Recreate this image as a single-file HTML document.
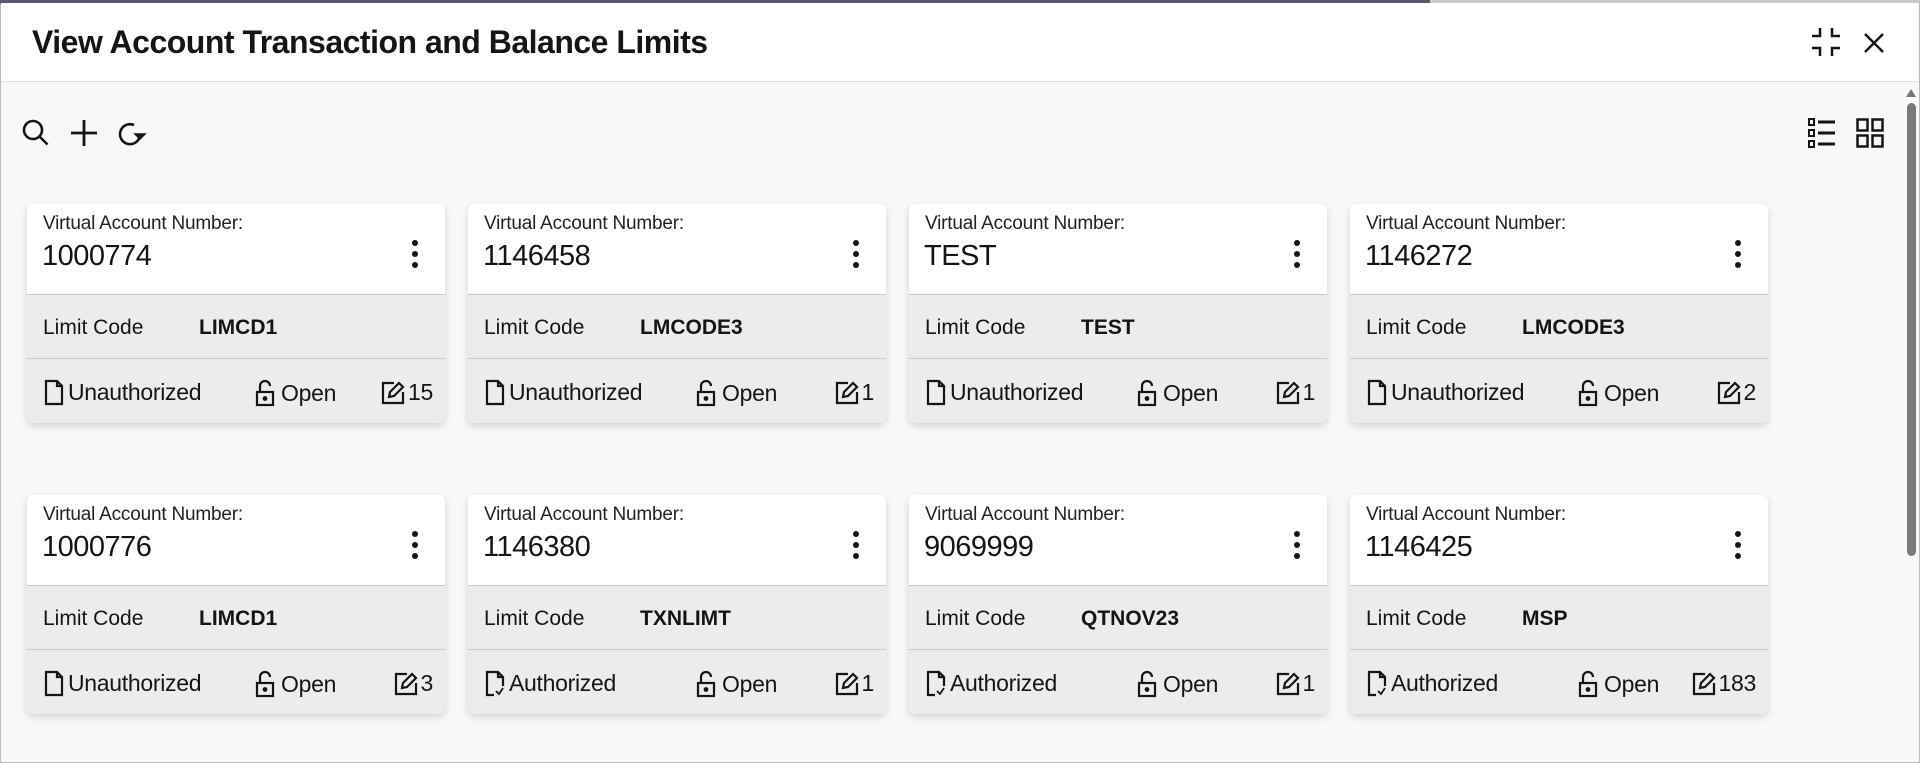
<!DOCTYPE html>
<html><head><meta charset="utf-8"><style>
*{box-sizing:border-box;margin:0;padding:0}
body{width:1920px;height:763px;overflow:hidden;background:#fff;font-family:"Liberation Sans",sans-serif;color:#161513;position:relative}
.frame{position:absolute;left:0;top:0;width:1920px;height:763px;border:1px solid #bbb;border-top:3px solid #c8c8d0;background:#f8f8f8}
.topbar{position:absolute;left:0;top:0;width:1430px;height:4px;background:#555a6e}
.hdr{position:absolute;left:1px;top:3px;width:1917px;height:79px;background:#fff;border-bottom:1px solid #ddd}
.hdr h1{position:absolute;left:31px;top:21px;font-size:32px;font-weight:bold;letter-spacing:-0.5px}
.card{position:absolute;width:418px;height:219px;border-radius:6px;background:#ececec;box-shadow:0 3px 8px rgba(0,0,0,.15);overflow:hidden}
.top{height:91px;background:#fff;border-bottom:1px solid #c9c9c9;position:relative}
.lbl{position:absolute;left:16px;top:9px;font-size:19px;letter-spacing:-0.2px;color:#222}
.num{position:absolute;left:15px;top:36px;font-size:29px;letter-spacing:-0.5px}
.dots{position:absolute;right:27px;top:36px;width:6px}
.dots i{display:block;width:6px;height:6px;border-radius:3px;background:#161513;margin-bottom:5px}
.lim{height:64px;border-bottom:1px solid #c9c9c9;position:relative;font-size:21px;letter-spacing:0}
.lim span{position:absolute;top:21px}
.ft{position:relative;height:64px;font-size:23px;letter-spacing:-0.3px}
.ft .s{position:absolute;left:17px;top:20px;display:flex;align-items:center;gap:4px}
.ft .o{position:absolute;left:228px;top:20px;display:flex;align-items:center;gap:6px}
.ft .e{position:absolute;right:12px;top:20px;display:flex;align-items:center;gap:3px}
svg{display:block}
</style></head><body>
<div class="frame"></div>
<div class="topbar"></div>
<div class="hdr"><h1>View Account Transaction and Balance Limits</h1>
<svg style="position:absolute;left:1809px;top:22px" width="32" height="34" viewBox="0 0 32 34" fill="none" stroke="#161513" stroke-width="2.5"><path d="M2 11h8V3M22 3v8h8M2 23h8v8M30 23h-8v8"/></svg>
<svg style="position:absolute;left:1862px;top:29px" width="22" height="22" viewBox="0 0 22 22" stroke="#161513" stroke-width="2.5"><path d="M2 2l18 18M20 2L2 20"/></svg>
</div>
<svg style="position:absolute;left:21px;top:118px" width="30" height="30" viewBox="0 0 30 30" fill="none" stroke="#161513" stroke-width="2.6"><circle cx="12" cy="12" r="9"/><path d="M18.5 18.5l8 8"/></svg>
<svg style="position:absolute;left:69px;top:118px" width="30" height="30" viewBox="0 0 30 30" stroke="#161513" stroke-width="2.8"><path d="M15 2v26M2 15h26"/></svg>
<svg style="position:absolute;left:117px;top:120px" width="30" height="28" viewBox="0 0 30 28" fill="none" stroke="#161513" stroke-width="2.6"><path d="M23 15A10 10 0 1 1 17 5"/><path d="M18 14l5 5 5-5z" fill="#161513" stroke-width="1.5"/></svg>
<svg style="position:absolute;left:1808px;top:118px" width="29" height="30" viewBox="0 0 29 30" fill="none" stroke="#161513" stroke-width="2"><rect x="1" y="1" width="5" height="6"/><rect x="1" y="12" width="5" height="6"/><rect x="1" y="23" width="5" height="6"/><path d="M10 4h17M10 15h17M10 26h17" stroke-width="3"/></svg>
<svg style="position:absolute;left:1856px;top:118px" width="28" height="30" viewBox="0 0 28 30" fill="none" stroke="#161513" stroke-width="2.5"><rect x="1.5" y="1.5" width="10" height="11"/><rect x="16.5" y="1.5" width="10" height="11"/><rect x="1.5" y="17.5" width="10" height="11"/><rect x="16.5" y="17.5" width="10" height="11"/></svg>
<svg style="position:absolute;left:1905px;top:88px" width="12" height="10"><path d="M1 9l5-8 5 8z" fill="#777"/></svg>
<div style="position:absolute;left:1907px;top:103px;width:9px;height:453px;border-radius:5px;background:#7a7a7a"></div>

<div id="cards"></div>
<script>
const data=[["1000774","LIMCD1",0,"15"],["1146458","LMCODE3",0,"1"],["TEST","TEST",0,"1"],["1146272","LMCODE3",0,"2"],
["1000776","LIMCD1",0,"3"],["1146380","TXNLIMT",1,"1"],["9069999","QTNOV23",1,"1"],["1146425","MSP",1,"183"]];
const doc='<svg width="20" height="27" viewBox="0 0 20 27" fill="none" stroke="#161513" stroke-width="2.2"><path d="M2 2h11l5 5v18H2z"/><path d="M13 2v5h5"/></svg>';
const auth='<svg width="20" height="27" viewBox="0 0 20 27" fill="none" stroke="#161513" stroke-width="2.2"><path d="M9 25H2V2h11l5 5v9"/><path d="M13 2v5h5"/><path d="M11 21l3 3 4-6" stroke-width="1.8"/></svg>';
const lock='<svg width="20" height="28" viewBox="0 0 20 28" fill="none" stroke="#161513" stroke-width="2.2"><rect x="2" y="13" width="16" height="13"/><path d="M5 13V7a5 5 0 0 1 10 0"/><circle cx="10" cy="19.5" r="1.3" fill="#161513"/></svg>';
const edit='<svg width="24" height="24" viewBox="0 0 24 24" fill="none" stroke="#161513" stroke-width="2.2"><path d="M13 2H2v20h20V11"/><path d="M8 16l1-5 9-9 4 4-9 9z"/></svg>';
let h='';
data.forEach((d,i)=>{const x=27+(i%4)*441,y=i<4?204:495;
h+=`<div class="card" style="left:${x}px;top:${y}px"><div class="top"><div class="lbl">Virtual Account Number:</div><div class="num">${d[0]}</div><div class="dots"><i></i><i></i><i></i></div></div>
<div class="lim"><span style="left:16px">Limit Code</span><span style="left:172px;font-weight:bold">${d[1]}</span></div>
<div class="ft"><div class="s">${d[2]?auth:doc}<span>${d[2]?'Authorized':'Unauthorized'}</span></div><div class="o">${lock}<span>Open</span></div><div class="e">${edit}<span>${d[3]}</span></div></div></div>`;});
document.getElementById('cards').innerHTML=h;
</script>
</body></html>
